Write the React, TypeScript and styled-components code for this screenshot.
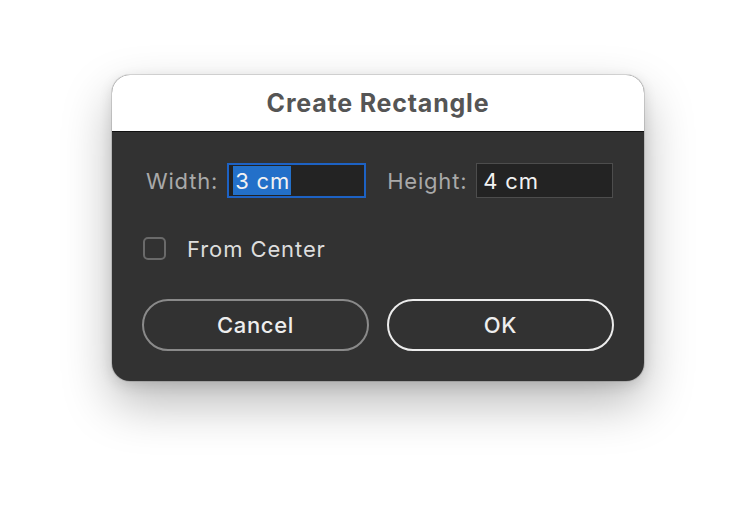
import React from 'react';
import styled, { createGlobalStyle } from 'styled-components';

const Global = createGlobalStyle`
    body {
        margin: 0;
        background: #ffffff;
        font-family: Inter, "Noto Sans", "Liberation Sans", sans-serif;
    }
`

const Page = styled.div`
    width: 756px;
    height: 530px;
    display: flex;
    justify-content: center;
    align-items: flex-start;
    padding-top: 75px;
    box-sizing: border-box;
`

const Dialog = styled.div`
    width: 532px;
    height: 306px;
    border-radius: 18px;
    overflow: hidden;
    background: #323232;
    display: flex;
    flex-direction: column;
    box-shadow: 0 0 0 1px rgba(0, 0, 0, 0.12), 0 22px 50px rgba(0, 0, 0, 0.28), 0 4px 14px rgba(0, 0, 0, 0.12);
`

const Header = styled.div`
    height: 57px;
    flex-shrink: 0;
    background: #ffffff;
    border-bottom: 1px solid #111;
    display: flex;
    align-items: center;
    justify-content: center;
    box-sizing: border-box;
    font-size: 25px;
    font-weight: 700;
    color: #555555;
    letter-spacing: 0.8px;
`

const Body = styled.div`
    flex: 1;
    padding: 31px 30px 30px 31px;
    display: flex;
    flex-direction: column;
`

const FieldRow = styled.div`
    display: flex;
    align-items: center;
    height: 35px;
`

const Label = styled.span<{ $before: number }>`
    font-size: 22px;
    letter-spacing: 0.8px;
    color: #a9a9a9;
    margin-left: ${p => p.$before}px;
    margin-right: 9px;
    white-space: nowrap;
`

const Field = styled.div<{ $focused?: boolean; $w: number }>`
    width: ${p => p.$w}px;
    flex-shrink: 0;
    height: 35px;
    box-sizing: border-box;
    background: #232323;
    border: ${p => (p.$focused ? '2px solid #1d62c4' : '1px solid #4d4d4d')};
    display: flex;
    align-items: center;
    padding-left: ${p => (p.$focused ? 4 : 6)}px;
    font-size: 22px;
    letter-spacing: 0.8px;
    color: #f2f2f2;
`

const Selection = styled.span`
    background: #2370c9;
    height: 29px;
    display: flex;
    align-items: center;
    padding: 0 1px 0 2px;
`

const CheckRow = styled.label`
    display: flex;
    align-items: center;
    margin-top: 39px;
    height: 23px;
    font-size: 22px;
    letter-spacing: 0.9px;
    color: #dddddd;
`

const Box = styled.span`
    width: 23px;
    height: 23px;
    box-sizing: border-box;
    border: 2px solid #6a6a6a;
    border-radius: 5px;
    margin-right: 21px;
`

const Buttons = styled.div`
    display: flex;
    gap: 18px;
    margin-top: auto;
    margin-left: -1px;
`

const Button = styled.button<{ $primary?: boolean }>`
    flex: 1;
    height: 52px;
    border-radius: 26px;
    background: transparent;
    border: 2px solid ${p => (p.$primary ? '#ececec' : '#8a8a8a')};
    color: #eeeeee;
    font-family: inherit;
    font-size: 22px;
    letter-spacing: 0.7px;
    font-weight: 500;
`

export default function App() {
    return <>
        <Global />
        <Page>
            <Dialog>
                <Header>Create Rectangle</Header>
                <Body>
                    <FieldRow>
                        <Label $before={3}>Width:</Label>
                        <Field $focused $w={139}><Selection>3 cm</Selection></Field>
                        <Label $before={21}>Height:</Label>
                        <Field $w={137}>4 cm</Field>
                    </FieldRow>
                    <CheckRow>
                        <Box />
                        From Center
                    </CheckRow>
                    <Buttons>
                        <Button>Cancel</Button>
                        <Button $primary>OK</Button>
                    </Buttons>
                </Body>
            </Dialog>
        </Page>
    </>
}
